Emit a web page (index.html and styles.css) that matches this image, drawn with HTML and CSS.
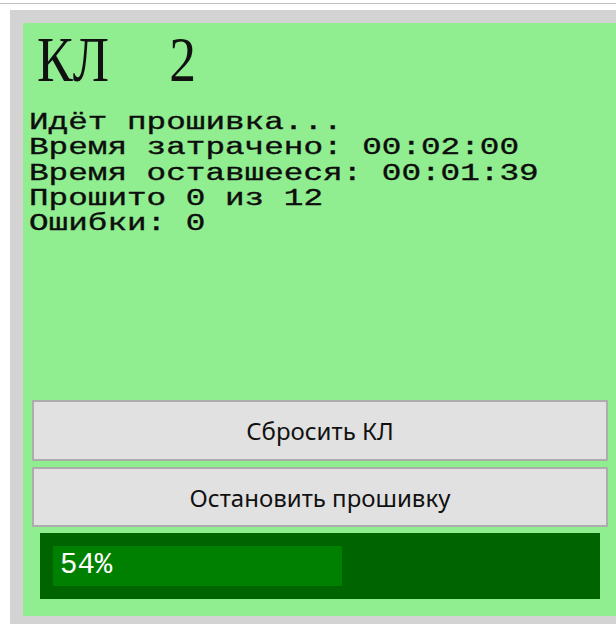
FILE: index.html
```html
<!DOCTYPE html>
<html lang="ru">
<head>
<meta charset="utf-8">
<title>КЛ 2</title>
<link rel="stylesheet" href="styles.css">
</head>
<body>
<div class="topbar"></div>
<div class="frame">
  <section class="card">
    <h1 class="title"><span class="title-text">КЛ 2</span></h1>
    <div class="status">
      <div>Идёт прошивка...</div>
      <div>Время затрачено: 00:02:00</div>
      <div>Время оставшееся: 00:01:39</div>
      <div>Прошито 0 из 12</div>
      <div>Ошибки: 0</div>
    </div>
    <div class="spacer"></div>
    <div class="actions">
      <button class="btn" type="button">Сбросить КЛ</button>
      <button class="btn" type="button">Остановить прошивку</button>
    </div>
    <div class="progress">
      <div class="progress-chunk" style="width: 289px;">54%</div>
    </div>
  </section>
</div>
</body>
</html>
```
FILE: styles.css
```css
html, body {
  margin: 0;
  padding: 0;
  overflow: hidden;
  background: #ffffff;
}

body {
  width: 616px;
  height: 624px;
}

/* thin rule along the top of the window */
.topbar {
  height: 3px;
  border-bottom: 1px solid #bdbdbd;
  margin-bottom: 6px;
}

/* grey frame around the device card (runs on past the right edge) */
.frame {
  margin-left: 10px;
  width: 606px;
  height: 614px;
  padding: 13px 0 8px 13px;
  box-sizing: border-box;
  background: #d3d3d3;
}

.card {
  background: #90ee90;
  height: 593px;
  display: flex;
  flex-direction: column;
  box-sizing: border-box;
  padding: 0 8px 17px 9px;
}

.title {
  margin: 0;
  height: 88px;
  font-family: "Liberation Serif", serif;
  font-weight: normal;
  font-size: 63px;
  line-height: 63px;
  color: #111;
  white-space: nowrap;
}

.title-text {
  display: inline-block;
  transform: scaleX(0.85);
  transform-origin: left top;
  margin-left: 5px;
  margin-top: 6px;
  word-spacing: 55px;
}

.status {
  align-self: flex-start;
  width: max-content;
  font-family: "Liberation Mono", monospace;
  font-size: 23px;
  line-height: 25.3px;
  color: #0d0d0d;
  -webkit-text-stroke: 0.35px #0d0d0d;
  transform: scaleX(1.42);
  transform-origin: left top;
  margin-left: -3px;
  white-space: nowrap;
}

.spacer {
  flex: 1;
}

.actions {
  display: flex;
  flex-direction: column;
  gap: 6px;
}

.btn {
  display: block;
  width: 100%;
  height: 61px;
  margin: 0;
  padding: 0;
  background: #e1e1e1;
  border: 2px solid #adadad;
  font-family: "Noto Sans", sans-serif;
  font-size: 24px;
  color: #111;
  text-align: center;
}

.btn + .btn {
  height: 60px;
}

.progress {
  margin: 6px 8px 0 8px;
  height: 66px;
  background: #006400;
  padding: 13px;
  box-sizing: border-box;
}

.progress-chunk {
  height: 40px;
  background: #008000;
  color: #ffffff;
  font-family: "Liberation Mono", monospace;
  font-size: 29px;
  line-height: 40px;
  padding-left: 7px;
  box-sizing: border-box;
}
```
